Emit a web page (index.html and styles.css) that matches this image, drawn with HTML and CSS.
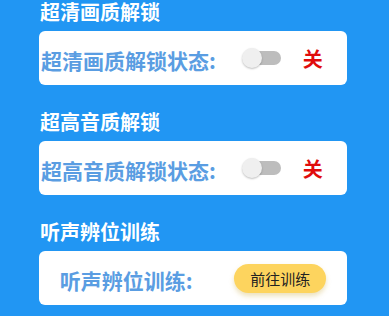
FILE: index.html
```html
<!DOCTYPE html>
<html lang="zh-CN">
<head>
<meta charset="utf-8">
<link rel="stylesheet" href="styles.css">
</head>
<body>
<div class="page">
  <section class="section">
    <div class="title">超清画质解锁</div>
    <div class="card card-switch">
      <span class="label">超清画质解锁状态:</span>
      <span class="switch"><span class="track"></span><span class="thumb"></span></span>
      <span class="state">关</span>
    </div>
  </section>
  <section class="section">
    <div class="title">超高音质解锁</div>
    <div class="card card-switch">
      <span class="label">超高音质解锁状态:</span>
      <span class="switch"><span class="track"></span><span class="thumb"></span></span>
      <span class="state">关</span>
    </div>
  </section>
  <section class="section">
    <div class="title">听声辨位训练</div>
    <div class="card card-train">
      <span class="label">听声辨位训练:</span>
      <span class="btn">前往训练</span>
    </div>
  </section>
</div>
</body>
</html>
```
FILE: styles.css
```css
html, body {
  margin: 0;
  padding: 0;
  background: #2196f3;
}
body {
  font-family: "Noto Sans CJK SC", "Noto Sans", sans-serif;
}
.page {
  display: flex;
  flex-direction: column;
  gap: 25px;
  padding: 0 42px 0 39px;
}
.section {
  display: flex;
  flex-direction: column;
  gap: 7px;
}
.title {
  color: #ffffff;
  font-size: 20px;
  font-weight: 700;
  line-height: 24px;
  padding-left: 1px;
}
.card {
  background: #ffffff;
  border-radius: 6px;
  height: 54px;
  display: flex;
  align-items: center;
}
.label {
  color: #5a9de2;
  font-size: 21px;
  font-weight: 700;
  line-height: 26px;
  padding-top: 3px;
}
.card-switch {
  padding-left: 2px;
}
.switch {
  position: relative;
  width: 39px;
  height: 20px;
  margin-left: 26px;
}
.track {
  position: absolute;
  left: 2px;
  top: 3px;
  width: 37px;
  height: 14px;
  border-radius: 7px;
  background: #bdbdbd;
}
.thumb {
  position: absolute;
  left: 0;
  top: 0;
  width: 20px;
  height: 20px;
  border-radius: 50%;
  background: #efefef;
  box-shadow: 0 1px 2px rgba(0,0,0,0.25);
}
.state {
  color: #e00b0b;
  font-size: 20px;
  font-weight: 700;
  line-height: 24px;
  margin-left: 22px;
  padding-top: 2px;
}
.card-train {
  justify-content: space-around;
}
.btn {
  width: 92px;
  height: 29px;
  border-radius: 15px;
  background: #fdd45e;
  box-shadow: 0 3px 5px rgba(200,170,60,0.35);
  color: #222222;
  font-size: 15px;
  line-height: 29px;
  text-align: center;
}
```
